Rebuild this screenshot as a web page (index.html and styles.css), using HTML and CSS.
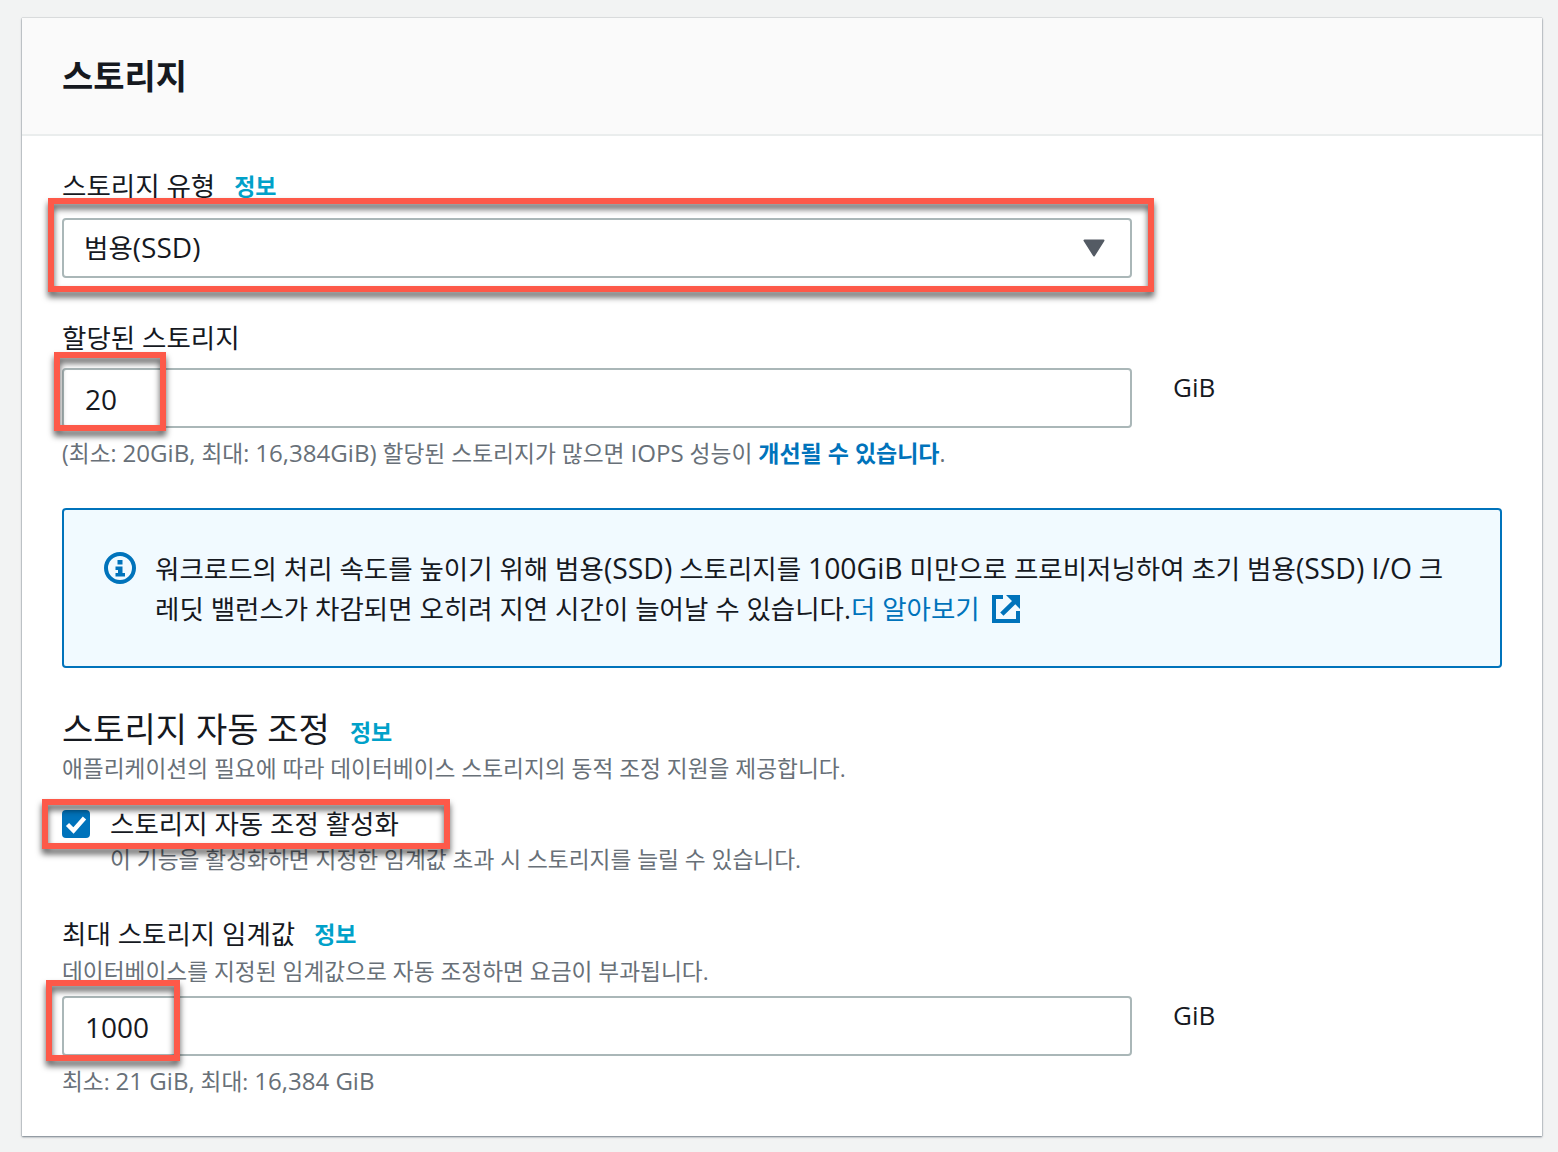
FILE: index.html
```html
<!DOCTYPE html>
<html lang="ko">
<head>
<meta charset="utf-8">
<title>스토리지</title>
<link rel="stylesheet" href="styles.css">
</head>
<body>
<section class="card">
  <header class="card-head"><h2 class="card-title">스토리지</h2></header>
  <div class="card-body">
    <div class="label-row first"><span class="label">스토리지 유형</span><a class="info">정보</a></div>
    <div class="control-row select-row">
      <div class="control select">
        <span>범용<span class="lat">(SSD)</span></span>
        <svg class="caret" width="22" height="18" viewBox="0 0 22 18"><path d="M1.5 1.5h19L11 16.5z" fill="#545b64" stroke="#545b64" stroke-width="2" stroke-linejoin="round"/></svg>
        <i class="mark mark-select"></i>
      </div>
    </div>
    <div class="label-row alloc"><span class="label">할당된 스토리지</span></div>
    <div class="control-row">
      <div class="control num"><span>20</span><i class="mark mark-alloc"></i></div>
      <span class="unit">GiB</span>
    </div>
    <p class="hint hint-alloc">(최소: <span class="lat">20GiB,</span> 최대: <span class="lat">16,384GiB)</span> 할당된 스토리지가 많으면 <span class="lat">IOPS</span> 성능이 <b class="strong-link">개선될 수 있습니다</b>.</p>

    <div class="alert">
      <svg class="alert-icon" width="32" height="32" viewBox="0 0 32 32"><circle cx="16" cy="16" r="14" fill="none" stroke="#0073bb" stroke-width="4"/><rect x="13.5" y="8" width="5" height="4.5" fill="#0073bb"/><path d="M11.5 14.5h7V21h2.5v3.5H11.5V21H14v-3h-2.5z" fill="#0073bb"/></svg>
      <p class="alert-text">워크로드의 처리 속도를 높이기 위해 범용<span class="lat">(SSD)</span> 스토리지를 <span class="lat">100GiB</span> 미만으로 프로비저닝하여 초기 범용<span class="lat">(SSD) I/O</span> 크<br>레딧 밸런스가 차감되면 오히려 지연 시간이 늘어날 수 있습니다.<a class="learn">더 알아보기</a><svg class="ext" width="28" height="28" viewBox="0 0 28 28"><path d="M11 2H2v24h24V16" fill="none" stroke="#0073bb" stroke-width="4"/><path d="M14 0h14v14l-4.7-4.7-11.8 11.4L8.2 17.5 20 6z" fill="#0073bb"/></svg></p>
    </div>

    <div class="label-row section"><h3 class="section-title">스토리지 자동 조정</h3><a class="info info-section">정보</a></div>
    <p class="desc section-desc">애플리케이션의 필요에 따라 데이터베이스 스토리지의 동적 조정 지원을 제공합니다.</p>
    <div class="check-row">
      <span class="checkbox"><svg width="28" height="28" viewBox="0 0 28 28"><path d="M5.5 14.5l6 6L22.5 8" fill="none" stroke="#fff" stroke-width="4.4"/></svg></span>
      <span class="check-label">스토리지 자동 조정 활성화</span>
      <i class="mark mark-check"></i>
    </div>
    <p class="desc check-desc">이 기능을 활성화하면 지정한 임계값 초과 시 스토리지를 늘릴 수 있습니다.</p>

    <div class="label-row max"><span class="label">최대 스토리지 임계값</span><a class="info">정보</a></div>
    <p class="desc max-desc">데이터베이스를 지정된 임계값으로 자동 조정하면 요금이 부과됩니다.</p>
    <div class="control-row max-row">
      <div class="control num"><span>1000</span><i class="mark mark-max"></i></div>
      <span class="unit">GiB</span>
    </div>
    <p class="hint hint-max">최소: <span class="lat">21 GiB,</span> 최대: <span class="lat">16,384 GiB</span></p>
  </div>
</section>
</body>
</html>
```
FILE: styles.css
```css
* { box-sizing: border-box; }
html, body { margin: 0; padding: 0; }
body {
  background: #f2f3f3;
  color: #16191f;
  font-family: "Open Sans", "Noto Sans CJK KR", sans-serif;
  font-size: 26.5px;
  line-height: 40px;
  padding: 18px 16px 16px 22px;
  height: 1152px;
  overflow: hidden;
}
.lat { font-size: 1.06em; }
.card {
  width: 1520px;
  height: 1118px;
  background: #fff;
  box-shadow: 0 1px 2px rgba(0, 21, 41, .5), 0 0 1px rgba(0, 21, 41, .4);
}
.card-head {
  height: 118px;
  background: #fafafa;
  border-bottom: 2px solid #eaeded;
  padding: 0 40px;
  display: flex;
  align-items: center;
}
.card-title { margin: 0; font-size: 34px; font-weight: 700; line-height: 1; }
.card-body { padding: 0 40px; }
.label-row { display: flex; align-items: center; height: 40px; }
.label-row.first { margin-top: 30px; }
.label-row.alloc { margin-top: 40px; margin-bottom: 10px; }
.label-row.section { margin-top: 41px; }
.label-row.max { margin-top: 37px; }
.info {
  color: #00a1c9;
  font-size: 23px;
  font-weight: 700;
  margin-left: 19px;
}
.section-title { margin: 0; font-size: 34px; font-weight: 400; line-height: 40px; }
.info-section { margin-left: 20px; margin-top: 6px; }
.control-row { display: flex; align-items: flex-start; }
.select-row { margin-top: 12px; }
.max-row { margin-top: 7px; }
.control {
  position: relative;
  width: 1070px;
  height: 60px;
  border: 2px solid #aab7b8;
  border-radius: 4px;
  background: #fff;
  padding: 0 20px;
  display: flex;
  align-items: center;
  justify-content: space-between;
}
.select { padding-bottom: 2px; }
.num { font-size: 28px; padding: 2px 21px 0; }
.caret { margin: 2px 5px 0 0; }
.unit { margin-left: 41px; margin-top: -1px; font-size: 26px; }
.hint, .desc { margin: 0; color: #687078; font-size: 22.7px; line-height: 34px; }
.hint-alloc { margin-top: 8px; font-size: 22.75px; }
.strong-link { color: #0073bb; font-weight: 700; font-size: 23px; }
.alert {
  margin-top: 37px;
  width: 1440px;
  height: 160px;
  background: #f1faff;
  border: 2px solid #0073bb;
  border-radius: 4px;
  padding: 38px 40px;
  display: flex;
  align-items: flex-start;
  gap: 19px;
}
.alert .lat { font-size: 1.07em; }
.alert-icon { flex: none; margin-top: 4px; }
.alert-text { margin: 0; }
.learn { color: #0073bb; }
.ext { vertical-align: -4px; margin-left: 12px; }
.desc { margin-top: 2px; }
.section-desc { margin-top: 3px; }
.check-row { position: relative; display: flex; align-items: center; margin-top: 18px; height: 40px; }
.checkbox {
  width: 28px;
  height: 28px;
  background: #0073bb;
  border-radius: 4px;
  display: flex;
}
.check-label { margin-left: 20px; }
.check-desc { margin: -1px 0 0 48px; }
.max-desc { margin-top: 1px; }
.hint-max { margin-top: 8px; }
.mark {
  position: absolute;
  border: 6px solid #fd5949;
  filter: drop-shadow(0 5px 3px rgba(0, 0, 0, .65));
  pointer-events: none;
}
.mark-select { left: -16px; top: -22px; width: 1106px; height: 94px; }
.mark-alloc { left: -10px; top: -18px; width: 112px; height: 79px; }
.mark-check { left: -20px; top: -5px; width: 408px; height: 50px; }
.mark-max { left: -18px; top: -18px; width: 134px; height: 81px; }
```
